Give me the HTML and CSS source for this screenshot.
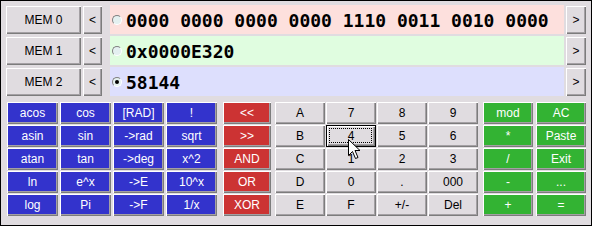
FILE: index.html
```html
<!DOCTYPE html>
<html>
<head>
<meta charset="utf-8">
<link rel="stylesheet" href="styles.css">
</head>
<body>
<div class="window">
  <div class="mem-rows">
    <div class="mem-row">
      <button class="btn mem">MEM 0</button>
      <button class="btn arrow">&lt;</button>
      <div class="display pink"><span class="radio"></span><span class="value">0000 0000 0000 0000 1110 0011 0010 0000</span></div>
      <button class="btn arrow right">&gt;</button>
    </div>
    <div class="mem-row">
      <button class="btn mem">MEM 1</button>
      <button class="btn arrow">&lt;</button>
      <div class="display mint"><span class="radio"></span><span class="value">0x0000E320</span></div>
      <button class="btn arrow right">&gt;</button>
    </div>
    <div class="mem-row">
      <button class="btn mem">MEM 2</button>
      <button class="btn arrow">&lt;</button>
      <div class="display lilac"><span class="radio on"></span><span class="value">58144</span></div>
      <button class="btn arrow right">&gt;</button>
    </div>
  </div>
  <div class="keypad">
    <div class="grid sci">
      <button class="btn blue">acos</button><button class="btn blue">cos</button><button class="btn blue">[RAD]</button><button class="btn blue">!</button>
      <button class="btn blue">asin</button><button class="btn blue">sin</button><button class="btn blue">-&gt;rad</button><button class="btn blue">sqrt</button>
      <button class="btn blue">atan</button><button class="btn blue">tan</button><button class="btn blue">-&gt;deg</button><button class="btn blue">x^2</button>
      <button class="btn blue">ln</button><button class="btn blue">e^x</button><button class="btn blue">-&gt;E</button><button class="btn blue">10^x</button>
      <button class="btn blue">log</button><button class="btn blue">Pi</button><button class="btn blue">-&gt;F</button><button class="btn blue">1/x</button>
    </div>
    <div class="grid bits">
      <button class="btn red">&lt;&lt;</button>
      <button class="btn red">&gt;&gt;</button>
      <button class="btn red">AND</button>
      <button class="btn red">OR</button>
      <button class="btn red">XOR</button>
    </div>
    <div class="grid digits">
      <button class="btn">A</button><button class="btn">7</button><button class="btn">8</button><button class="btn">9</button>
      <button class="btn">B</button><button class="btn focus">4<svg class="cursor" width="13" height="21" viewBox="0 0 13 21"><path d="M0.5 0.5 L0.5 16.5 L4.5 12.5 L7.5 19.5 L10 18.5 L7 11.5 L12 11.5 Z" fill="#fff" stroke="#000" stroke-width="1"/></svg></button><button class="btn">5</button><button class="btn">6</button>
      <button class="btn">C</button><button class="btn">1</button><button class="btn">2</button><button class="btn">3</button>
      <button class="btn">D</button><button class="btn">0</button><button class="btn">.</button><button class="btn">000</button>
      <button class="btn">E</button><button class="btn">F</button><button class="btn">+/-</button><button class="btn">Del</button>
    </div>
    <div class="grid ops">
      <button class="btn green">mod</button><button class="btn green">AC</button>
      <button class="btn green">*</button><button class="btn green">Paste</button>
      <button class="btn green">/</button><button class="btn green">Exit</button>
      <button class="btn green">-</button><button class="btn green">...</button>
      <button class="btn green">+</button><button class="btn green">=</button>
    </div>
  </div>
</div>
</body>
</html>
```

FILE: styles.css
```css
html, body {
  margin: 0;
  padding: 0;
  background: #e0dce0;
}

.window {
  box-sizing: border-box;
  width: 592px;
  height: 226px;
  border: 1px solid #000;
  background: #e0dce0;
  padding: 4px 0 0 5px;
  font-family: "Liberation Sans", Arial, sans-serif;
  font-size: 12px;
}

.mem-rows {
  display: flex;
  flex-direction: column;
  gap: 2px;
}

.mem-row {
  display: flex;
  height: 29px;
  align-items: flex-end;
}

.btn {
  box-sizing: border-box;
  margin: 0;
  padding: 0;
  border: none;
  background: #e0dce0;
  color: #000;
  font-family: "Liberation Sans", Arial, sans-serif;
  font-size: 12px;
  line-height: 1;
  box-shadow: inset 1px 1px #ffffff, inset -1px -1px #7c7c7c, inset -2px -2px #a4a0a4;
  display: flex;
  align-items: center;
  justify-content: center;
  position: relative;
}

.mem {
  width: 75px;
  height: 28px;
}

.arrow {
  width: 19px;
  height: 28px;
  margin-left: 2px;
}

.arrow.right {
  width: 20px;
  margin-left: 2px;
}

.display {
  align-self: stretch;
  width: 454px;
  margin-left: 8px;
  display: flex;
  align-items: center;
  padding-left: 2px;
  box-sizing: border-box;
}

.pink { background: #fde0dd; }
.mint { background: #e0fde0; }
.lilac { background: #dddffd; }

.radio {
  box-sizing: border-box;
  width: 10px;
  height: 10px;
  border-radius: 50%;
  border: 1px solid;
  border-color: #808080 #ffffff #ffffff #808080;
  background: #e4f0f0;
  margin-right: 4px;
  margin-top: 1px;
  position: relative;
}

.radio.on::after {
  content: "";
  position: absolute;
  left: 2px;
  top: 2px;
  width: 4px;
  height: 4px;
  border-radius: 50%;
  background: #000;
}

.value {
  font-family: "DejaVu Sans Mono", "Liberation Mono", monospace;
  font-weight: bold;
  font-size: 18px;
  white-space: pre;
  color: #000;
  margin-top: 2px;
}

.keypad {
  display: flex;
  margin-top: 6px;
  margin-left: 1px;
}

.grid {
  display: grid;
  grid-auto-rows: 22px;
  row-gap: 1px;
}

.sci {
  grid-template-columns: repeat(4, 51px);
  column-gap: 2px;
}

.bits {
  grid-template-columns: 48px;
  margin-left: 6px;
}

.digits {
  grid-template-columns: repeat(4, 50px);
  column-gap: 1px;
  margin-left: 4px;
}

.ops {
  grid-template-columns: repeat(2, 50px);
  column-gap: 3px;
  margin-left: 5px;
}

.blue { background: #3333cc; color: #fff; }
.red { background: #cc3333; color: #fff; }
.green { background: #33b333; color: #fff; }

.focus {
  border: 1px solid #000;
}

.focus::after {
  content: "";
  position: absolute;
  left: 2px;
  top: 2px;
  right: 3px;
  bottom: 3px;
  border: 1px dotted #000;
}

.cursor {
  position: absolute;
  left: 21px;
  top: 13px;
  z-index: 2;
}
```
